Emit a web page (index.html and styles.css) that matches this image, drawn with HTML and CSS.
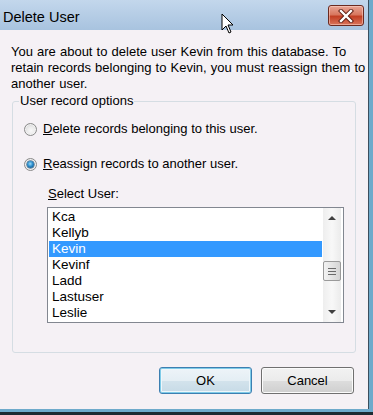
FILE: index.html
```html
<!DOCTYPE html>
<html>
<head>
<meta charset="utf-8">
<link rel="stylesheet" href="styles.css">
</head>
<body>
<div class="frame">
  <div class="dialog">
    <div class="titlebar">
      <span class="title">Delete User</span>
      <div class="close">
        <svg width="18" height="14" viewBox="0 0 18 14">
          <path d="M4 2 L14 12 M14 2 L4 12" stroke="#5a1a10" stroke-width="4.2" stroke-linecap="square"/>
          <path d="M4 2 L14 12 M14 2 L4 12" stroke="#ffffff" stroke-width="2.4" stroke-linecap="square"/>
        </svg>
      </div>
      <svg class="cursor" width="14" height="22" viewBox="0 0 14 22">
        <path d="M1 1 L1 17 L5 13 L8 20 L10 19 L7 12 L12 12 Z" fill="#ffffff" stroke="#000000" stroke-width="1"/>
      </svg>
    </div>
    <div class="content">
      <p class="intro">You are about to delete user Kevin from this database. To retain records belonging to Kevin, you must reassign them to another user.</p>
      <fieldset class="group">
        <legend class="legend">User record options</legend>
        <div class="group-body">
          <label class="option opt-first"><span class="radio"></span><span><u>D</u>elete records belonging to this user.</span></label>
          <label class="option opt-second"><span class="radio checked"><span class="dot"></span></span><span><u>R</u>eassign records to another user.</span></label>
          <div class="select-block">
            <div class="select-label"><u>S</u>elect User:</div>
            <div class="listbox">
              <div class="items">
                <div class="item">Kca</div>
                <div class="item">Kellyb</div>
                <div class="item selected">Kevin</div>
                <div class="item">Kevinf</div>
                <div class="item">Ladd</div>
                <div class="item">Lastuser</div>
                <div class="item">Leslie</div>
              </div>
              <div class="scrollbar">
                <div class="arrow up"></div>
                <div class="track-top"></div>
                <div class="thumb"><span></span><span></span><span></span></div>
                <div class="track-bottom"></div>
                <div class="arrow down"></div>
              </div>
            </div>
          </div>
        </div>
      </fieldset>
      <div class="buttons">
        <div class="btn btn-default">OK</div>
        <div class="btn">Cancel</div>
      </div>
    </div>
  </div>
</div>
</body>
</html>
```
FILE: styles.css
```css
html, body {
  margin: 0;
  padding: 0;
}
body {
  width: 373px;
  height: 415px;
  background: #1e2a31;
  font-family: "Liberation Sans", Arial, sans-serif;
  font-size: 13px;
  line-height: 16px;
  color: #000;
  overflow: hidden;
}
.frame {
  width: 373px;
  height: 412px;
  background: #6eaacb;
}
.dialog {
  width: 368px;
  height: 409px;
  border-right: 1px solid #3b4f5e;
  display: flex;
  flex-direction: column;
  background: #f5f1f5;
}
.titlebar {
  height: 30px;
  flex: none;
  position: relative;
  background: linear-gradient(#c3d7ec, #a8c3df);
  display: flex;
  align-items: center;
}
.title {
  font-size: 14.5px;
  margin-left: 3px;
  margin-top: 3px;
}
.close {
  position: absolute;
  left: 328px;
  top: 5px;
  width: 34px;
  height: 19px;
  border: 1px solid #6b2a20;
  border-radius: 3px;
  background: linear-gradient(#e9a595 0%, #d8775f 45%, #c23f24 55%, #d9745a 100%);
  display: flex;
  align-items: center;
  justify-content: center;
  box-shadow: inset 0 0 0 1px rgba(255,220,210,0.5);
}
.cursor {
  position: absolute;
  left: 221px;
  top: 13px;
}
.content {
  flex: 1;
  display: flex;
  flex-direction: column;
}
.intro {
  margin: 14px 0 0 11px;
  width: 360px;
  word-spacing: 0.5px;
}
.group {
  margin: 1px 0 0 12px;
  padding: 0;
  width: 344px;
  height: 260px;
  box-sizing: border-box;
  border: 1px solid #d5dde3;
  border-radius: 3px;
  min-width: 0;
}
.legend {
  margin-left: 6px;
  padding: 0 1px;
}
.group-body {
  padding: 12px 0 0 11px;
  display: flex;
  flex-direction: column;
}
.option {
  display: flex;
  align-items: center;
  gap: 6px;
  height: 16px;
}
.opt-second {
  margin-top: 19px;
}
.radio {
  width: 11px;
  height: 11px;
  border-radius: 50%;
  border: 1px solid #8a8a8a;
  background: radial-gradient(circle at 55% 60%, #f8f8f8 0%, #ececec 40%, #c9c9c9 100%);
  display: flex;
  align-items: center;
  justify-content: center;
  box-shadow: inset 0 0 0 1px #f2f2f2;
}
.dot {
  width: 7px;
  height: 7px;
  border-radius: 50%;
  background: radial-gradient(circle at 45% 40%, #9fdcf8 0%, #2a8ccb 45%, #0d3b66 100%);
  box-shadow: 0 0 0 0.5px #1b4a70;
}
.select-block {
  margin: 14px 0 0 23px;
}
.select-label {
  margin-left: 1px;
}
.listbox {
  margin-top: 5px;
  width: 297px;
  height: 116px;
  box-sizing: border-box;
  border: 1px solid #828790;
  background: #fff;
  display: flex;
}
.items {
  flex: 1;
  padding: 1px;
}
.item {
  height: 16px;
  line-height: 16px;
  padding-left: 3px;
  font-size: 13.5px;
}
.selected {
  background: #3399ff;
  color: #fff;
}
.scrollbar {
  width: 18px;
  margin-right: 2px;
  display: flex;
  flex-direction: column;
  align-items: center;
  background: linear-gradient(90deg, #eeeeee, #f8f8f8 50%, #ebebeb);
}
.arrow {
  width: 0;
  height: 0;
  border-left: 4px solid transparent;
  border-right: 4px solid transparent;
}
.arrow.up {
  margin-top: 8px;
  border-bottom: 4px solid #404040;
}
.arrow.down {
  margin-bottom: 8px;
  border-top: 4px solid #404040;
}
.track-top {
  height: 41px;
}
.track-bottom {
  flex: 1;
}
.thumb {
  width: 16px;
  height: 18px;
  border: 1px solid #9a9a9a;
  border-radius: 2px;
  background: linear-gradient(90deg, #f2f2f2, #e4e4e4 50%, #d4d4d4);
  display: flex;
  flex-direction: column;
  align-items: center;
  justify-content: center;
  gap: 2px;
}
.thumb span {
  width: 8px;
  height: 1px;
  background: #6a6a6a;
}
.buttons {
  margin-top: 14px;
  padding-right: 14px;
  display: flex;
  justify-content: flex-end;
  gap: 9px;
}
.btn {
  width: 93px;
  height: 27px;
  box-sizing: border-box;
  border: 1px solid #707070;
  border-radius: 3px;
  background: linear-gradient(#f2f2f2 0%, #ebebeb 50%, #dddddd 51%, #cfcfcf 100%);
  display: flex;
  align-items: center;
  justify-content: center;
  box-shadow: inset 0 0 0 1px #fbfbfb;
}
.btn-default {
  border-color: #3c7fb1;
  background: linear-gradient(#eef4f8 0%, #e4eef4 50%, #d3e3ec 51%, #c6dae6 100%);
  box-shadow: inset 0 0 0 1px #7fcbe8, inset 0 0 0 2px #eef6fa;
}
```
